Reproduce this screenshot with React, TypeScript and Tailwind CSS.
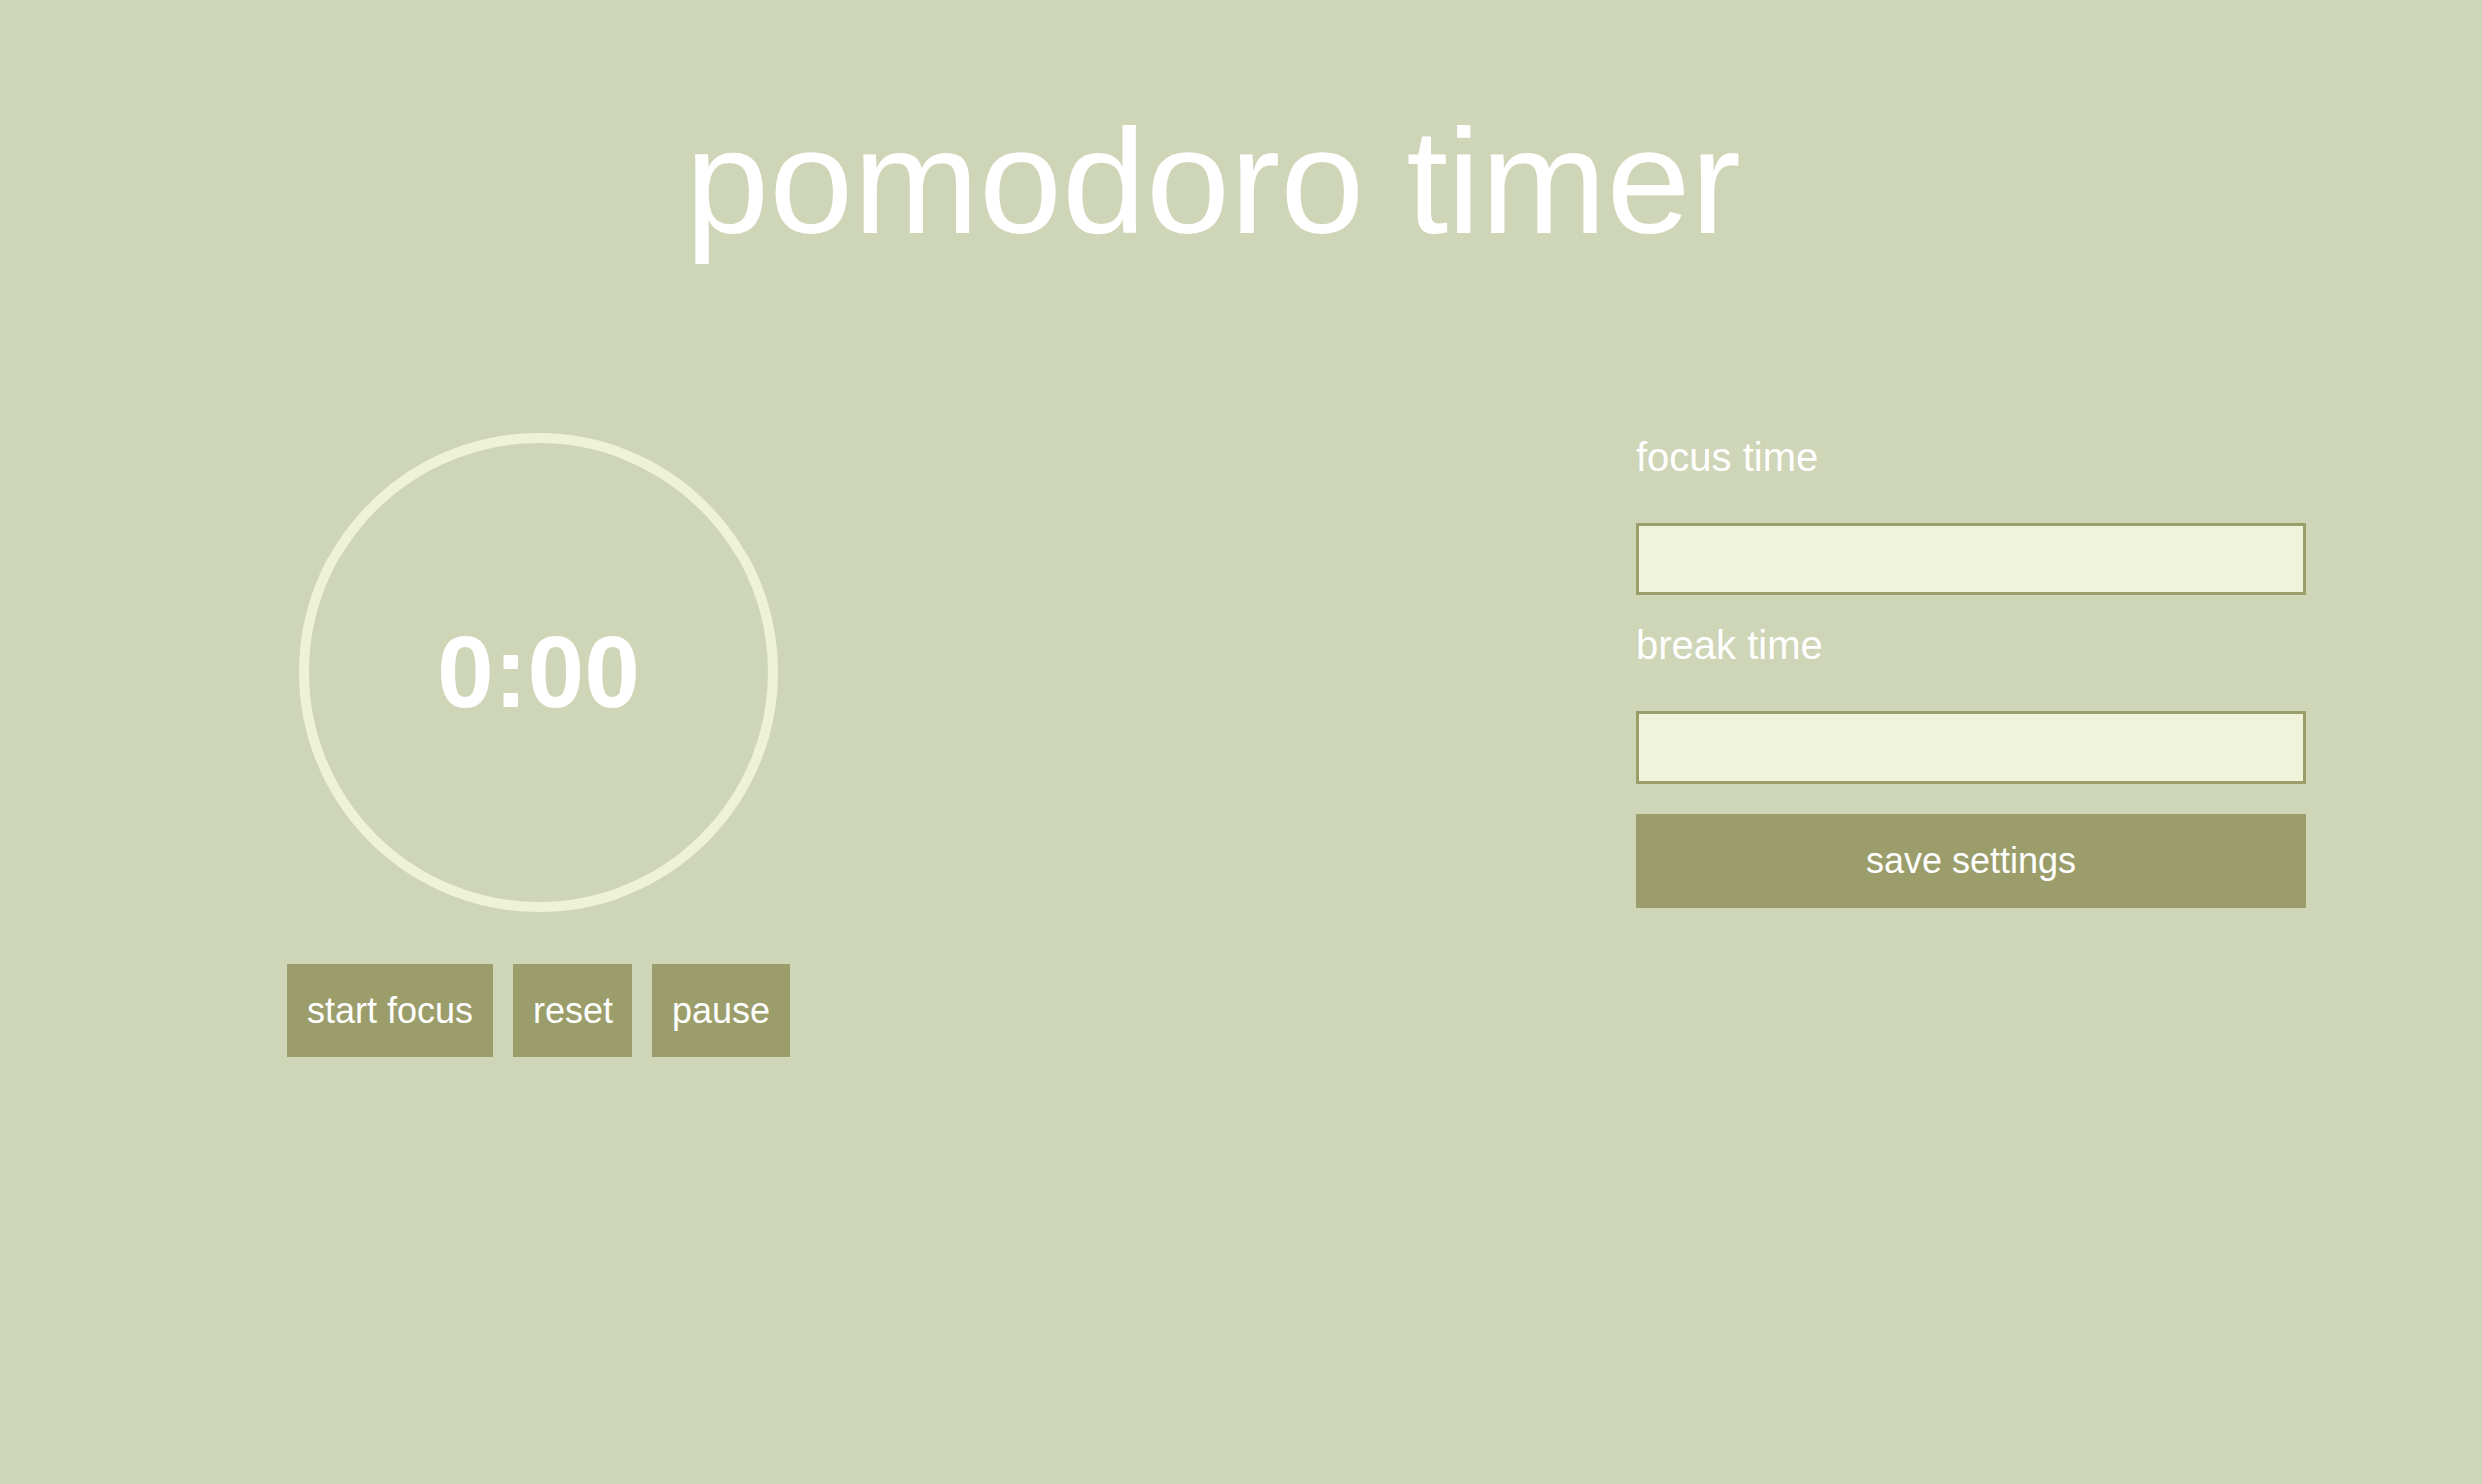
import { useState } from 'react';

export default function App() {
  const [focusTime, setFocusTime] = useState('');
  const [breakTime, setBreakTime] = useState('');
  const [seconds] = useState(0);

  const formatTime = (total: number) => {
    const m = Math.floor(total / 60);
    const s = total % 60;
    return `${m}:${s.toString().padStart(2, '0')}`;
  };

  return (
    <div className="min-h-screen w-full bg-[#cfd5b7] font-['Liberation_Sans',Arial,sans-serif] text-white">
      {/* Title */}
      <h1 className="pt-[106px] pr-[56px] text-center text-[151px] leading-none font-normal whitespace-nowrap">
        pomodoro timer
      </h1>

      <div className="mt-[175px] flex items-start">
        {/* Timer */}
        <div className="ml-[288px] mt-[2px] flex w-[504px] flex-col items-center">
          <div className="flex h-[480px] w-[480px] items-center justify-center rounded-full border-[10px] border-[#eef3d8]">
            <span className="text-[102px] leading-none font-bold">{formatTime(seconds)}</span>
          </div>
          <div className="mt-[53px] flex gap-[20px] whitespace-nowrap">
            <button className="h-[93px] bg-[#9b9d6b] px-[20px] text-[36px] leading-none">start focus</button>
            <button className="h-[93px] bg-[#9b9d6b] px-[20px] text-[36px] leading-none">reset</button>
            <button className="h-[93px] bg-[#9b9d6b] px-[20px] text-[36px] leading-none">pause</button>
          </div>
        </div>

        {/* Settings */}
        <div className="ml-[848px] flex w-[672px] flex-col">
          <label className="mt-[3px] text-[40px] leading-[46px]">focus time</label>
          <input
            type="number"
            value={focusTime}
            onChange={(e) => setFocusTime(e.target.value)}
            className="mt-[43px] h-[73px] w-full border-[3px] border-[#9b9d6b] bg-[#eff3da] outline-none"
          />
          <label className="mt-[27px] text-[40px] leading-[46px]">break time</label>
          <input
            type="number"
            value={breakTime}
            onChange={(e) => setBreakTime(e.target.value)}
            className="mt-[43px] h-[73px] w-full border-[3px] border-[#9b9d6b] bg-[#eff3da] outline-none"
          />
          <button className="mt-[30px] h-[94px] w-full bg-[#9b9d6b] text-[36px] leading-none">save settings</button>
        </div>
      </div>
    </div>
  );
}
